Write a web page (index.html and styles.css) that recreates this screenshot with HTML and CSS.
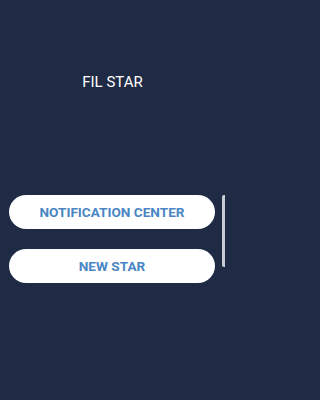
FILE: index.html
```html
<!DOCTYPE html>
<html>
<head>
<meta charset="utf-8">
<link rel="stylesheet" href="styles.css">
</head>
<body>
<div class="screen">
  <h1 class="title">FIL STAR</h1>
  <div class="actions">
    <button class="btn">NOTIFICATION CENTER</button>
    <button class="btn">NEW STAR</button>
  </div>
  <div class="edge-handle"></div>
</div>
</body>
</html>
```
FILE: styles.css
```css
html, body {
  margin: 0;
  padding: 0;
  background: #1f2a44;
}
.screen {
  position: relative;
  width: 225px;
  height: 400px;
  background: #1f2a44;
  font-family: Roboto, "Liberation Sans", sans-serif;
  display: flex;
  flex-direction: column;
  align-items: stretch;
}
.title {
  margin: 73px 0 0 0;
  color: #ffffff;
  font-size: 15px;
  font-weight: 400;
  line-height: 18px;
  text-align: center;
}
.actions {
  margin: 104px 10px 0 9px;
  display: flex;
  flex-direction: column;
  gap: 20px;
}
.btn {
  height: 34px;
  border: none;
  border-radius: 17px;
  background: #ffffff;
  color: #4a86c3;
  font-family: Roboto, "Liberation Sans", sans-serif;
  font-weight: 700;
  font-size: 13.6px;
  padding: 0;
}
.edge-handle {
  position: absolute;
  right: 0;
  top: 195px;
  width: 3px;
  height: 72px;
  background: #c9ccd3;
  border-radius: 2px 0 0 2px;
}
```
